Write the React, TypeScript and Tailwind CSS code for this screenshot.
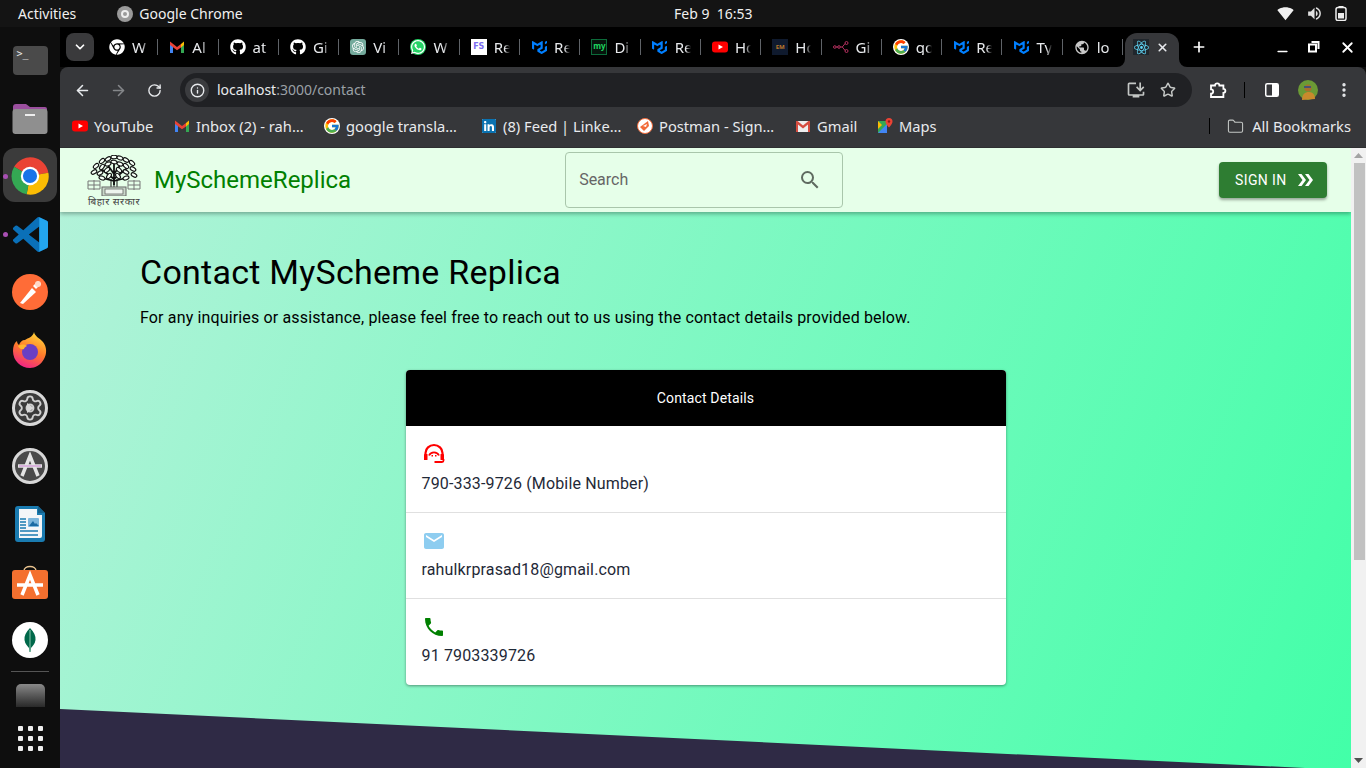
import type { ReactNode } from 'react'
import { ArrowLeft, ArrowRight, RotateCw, Info, Star, Folder, X, Plus, Minus, EllipsisVertical, Settings, ChevronDown } from 'lucide-react'
import { FaGithub, FaWhatsapp, FaChrome, FaLinkedin } from 'react-icons/fa'
import { FcGoogle } from 'react-icons/fc'
import { MdEmail, MdPhone, MdSearch, MdPublic, MdSignalWifi4Bar, MdVolumeUp, MdInstallDesktop } from 'react-icons/md'
import { SiMui, SiOpenai, SiReact } from 'react-icons/si'

const ui = "font-['Noto_Sans',sans-serif]"

function ChromeLogo({ size = 48 }: { size?: number }) {
  return (
    <svg width={size} height={size} viewBox="0 0 48 48">
      <path d="M24 24L5 13A22 22 0 0 1 46 20Z" fill="#ea4335" />
      <path d="M24 24L46 20A22 22 0 0 1 20 46Z" fill="#fbbc04" />
      <path d="M24 24L20 46A22 22 0 0 1 5 13Z" fill="#34a853" />
      <circle cx="24" cy="24" r="11" fill="#fff" />
      <circle cx="24" cy="24" r="8.5" fill="#1a73e8" />
    </svg>
  )
}

function GmailM() {
  return (
    <svg width="16" height="16" viewBox="0 0 16 16">
      <path d="M1 14V4l3 2.4V14z" fill="#4285f4" />
      <path d="M12 14V6.4L15 4v10z" fill="#34a853" />
      <path d="M1 2.5L8 8l4-3v3.4L8 11.2 1 6z" fill="#ea4335" />
      <path d="M12 5l3-2.5V6l-3 2.4z" fill="#fbbc04" />
    </svg>
  )
}

function YouTubeIcon() {
  return (
    <svg width="16" height="16" viewBox="0 0 16 16">
      <rect y="2.5" width="16" height="11" rx="3" fill="#f00" />
      <path d="M6.5 5.5v5L11 8z" fill="#fff" />
    </svg>
  )
}

function PostmanSmall() {
  return (
    <svg width="16" height="16" viewBox="0 0 16 16">
      <circle cx="8" cy="8" r="7.5" fill="#fff" stroke="#f26b3a" />
      <path d="M3 9l8-6 1 5-5 5z" fill="#f26b3a" />
      <path d="M6 8l4-2-1 3z" fill="#fff" />
    </svg>
  )
}

function GmailEnvelope() {
  return (
    <svg width="16" height="16" viewBox="0 0 16 16">
      <rect x="1" y="3" width="14" height="11" fill="#eee" />
      <path d="M1 3h1.5L8 7.5 13.500 3H15v11h-2V6.500L8 10.500 3 6.500V14H1z" fill="#d54c3f" />
    </svg>
  )
}

function MapsIcon() {
  return (
    <svg width="16" height="16" viewBox="0 0 16 16">
      <path d="M1 3h9v12H1z" fill="#34a853" />
      <path d="M1 15l9-9v9z" fill="#4285f4" />
      <path d="M1 3l4 4-4 4z" fill="#fbbc04" />
      <path d="M12 0a3.500 3.500 0 0 0-3.500 3.500C8.500 6 12 9.500 12 9.500S15.500 6 15.500 3.500A3.500 3.500 0 0 0 12 0z" fill="#ea4335" />
      <circle cx="12" cy="3.500" r="1.200" fill="#8c1d18" />
    </svg>
  )
}

function GitNodes() {
  return (
    <svg width="16" height="16" viewBox="0 0 16 16" fill="none" stroke="#b5305f" strokeWidth="1">
      <circle cx="1.800" cy="8" r="1.300" />
      <circle cx="6" cy="8" r="1.300" />
      <circle cx="13.500" cy="4" r="1.500" />
      <circle cx="13.500" cy="12" r="1.500" />
      <path d="M3 8h2M7.300 8h2l2.800-3.500M9.300 8l2.800 3.500" />
    </svg>
  )
}

const tabs: { icon: ReactNode; label: string }[] = [
  { icon: <FaChrome size={16} className="text-white" />, label: 'W' },
  { icon: <GmailM />, label: 'Al' },
  { icon: <FaGithub size={16} className="text-white" />, label: 'at' },
  { icon: <FaGithub size={16} className="text-white" />, label: 'Gi' },
  {
    icon: (
      <span className="w-4 h-4 rounded-[3px] bg-[#74aa9c] flex items-center justify-center">
        <SiOpenai size={12} className="text-white" />
      </span>
    ),
    label: 'Vi',
  },
  {
    icon: (
      <span className="w-4 h-4 rounded-full bg-[#25d366] flex items-center justify-center">
        <FaWhatsapp size={16} className="text-white" />
      </span>
    ),
    label: 'W',
  },
  {
    icon: (
      <span className="w-4 h-4 bg-white text-[#7b6cf0] text-[8px] font-bold leading-4 text-center font-['DejaVu_Sans',sans-serif]">
        FS
      </span>
    ),
    label: 'Re',
  },
  { icon: <SiMui size={15} className="text-[#007fff]" />, label: 'Re' },
  {
    icon: (
      <span className="w-4 h-4 bg-[#06130c] border border-[#0c6b3a] text-[#1ed760] text-[8px] font-bold leading-3 text-center">
        my
      </span>
    ),
    label: 'Di',
  },
  { icon: <SiMui size={15} className="text-[#007fff]" />, label: 'Re' },
  { icon: <YouTubeIcon />, label: 'Ho' },
  {
    icon: (
      <span className="w-4 h-4 bg-[#0f1a2e] text-[#b9772a] text-[6px] font-bold leading-4 text-center">
        EM
      </span>
    ),
    label: 'Ho',
  },
  { icon: <GitNodes />, label: 'Gi' },
  { icon: <FcGoogle size={16} className="bg-white rounded-full" />, label: 'go' },
  { icon: <SiMui size={15} className="text-[#007fff]" />, label: 'Re' },
  { icon: <SiMui size={15} className="text-[#007fff]" />, label: 'Ty' },
  { icon: <MdPublic size={17} className="text-[#c8c8c8]" />, label: 'lo' },
]

function TabStrip() {
  return (
    <div className="h-10 bg-black flex items-center text-white shrink-0">
      <div className="w-7 h-7 ml-1.5 mr-1 rounded-lg bg-[#3a3a3c] flex items-center justify-center shrink-0">
        <ChevronDown size={14} strokeWidth={3} />
      </div>
      {tabs.map((t, i) => (
        <div key={i} className="w-[60.3px] h-4 pl-[11px] flex items-center shrink-0">
          <span className="w-4 h-4 flex items-center justify-center shrink-0">{t.icon}</span>
          <span className="ml-[7px] w-[16px] overflow-hidden text-[15px] leading-4 text-[#e8eaed] whitespace-nowrap [mask-image:linear-gradient(to_right,black_65%,transparent)]">
            {t.label}
          </span>
          <span className="ml-auto w-px h-4 bg-[#5f6368]" />
        </div>
      ))}
      <div className="relative ml-[2px] mt-[6px] w-[54px] h-[34px] pb-[6px] bg-[#36373a] rounded-t-xl flex items-center pl-2 shrink-0">
        <svg className="absolute -left-2 bottom-0" width="8" height="8" viewBox="0 0 8 8"><path d="M8 0v8H0a8 8 0 0 0 8-8z" fill="#36373a" /></svg>
        <svg className="absolute -right-2 bottom-0" width="8" height="8" viewBox="0 0 8 8"><path d="M0 0v8h8a8 8 0 0 1-8-8z" fill="#36373a" /></svg>
        <span className="w-4 h-4 bg-[#20262c] flex items-center justify-center">
          <SiReact size={15} className="text-[#61dafb]" />
        </span>
        <X size={13} strokeWidth={3} className="ml-[7px] text-[#e8eaed]" />
      </div>
      <Plus size={16} strokeWidth={2.5} className="ml-3" />
      <Minus size={15} strokeWidth={2.5} className="ml-[68px] mt-2" />
      <svg className="ml-[18px]" width="12" height="12" viewBox="0 0 12 12" fill="none" stroke="#fff" strokeWidth="2">
        <path d="M3.500 1h7v7" />
        <rect x="1" y="3.500" width="7" height="7" />
      </svg>
      <X size={17} strokeWidth={2.5} className="ml-[19px]" />
    </div>
  )
}

function Toolbar() {
  return (
    <div className="h-10 shrink-0 bg-[#36373a] rounded-tr-lg rounded-tl-lg flex items-center pt-[6px] text-[#e8eaed]">
      <ArrowLeft size={17} strokeWidth={2.2} className="ml-[14px]" />
      <ArrowRight size={17} strokeWidth={2.2} className="ml-[19px] text-[#85878a]" />
      <RotateCw size={15} strokeWidth={2.2} className="ml-[20px]" />
      <div className="ml-[18px] w-[1012px] h-[34px] rounded-full bg-[#202124] flex items-center pl-[5px]">
        <span className="w-6 h-6 rounded-full bg-[#3b3c3f] flex items-center justify-center">
          <Info size={15} strokeWidth={2.2} />
        </span>
        <span className="ml-2 mb-[1px] text-[14px]">
          localhost<span className="text-[#9aa0a6]">:3000/contact</span>
        </span>
        <MdInstallDesktop size={20} className="ml-auto text-[#c4c7c5]" />
        <Star size={16} strokeWidth={2.2} className="ml-[14px] mr-4 text-[#c4c7c5]" />
      </div>
      <svg className="ml-[17px]" width="18" height="18" viewBox="0 0 18 18" fill="none" stroke="#fff" strokeWidth="1.800">
        <path d="M2 4.500h4a2.200 2.200 0 0 1 4.400 0h4v3.300a2 2 0 0 1 0 4V16H2v-3.300a1.800 1.800 0 0 0 0-4.400z" />
      </svg>
      <span className="ml-[17px] w-px h-4 bg-black" />
      <svg className="ml-[20px]" width="14" height="14" viewBox="0 0 14 14">
        <rect x="0.750" y="0.750" width="12.500" height="12.500" rx="1.500" fill="none" stroke="#fff" strokeWidth="1.500" />
        <rect x="7" y="1" width="6" height="12" fill="#fff" />
      </svg>
      <svg className="ml-[19px]" width="20" height="20" viewBox="0 0 20 20">
        <circle cx="10" cy="10" r="10" fill="#6b9a35" />
        <path d="M4 20c0-6 3-8 7-8s6 3 6 7z" fill="#c98a2c" />
        <circle cx="10" cy="8" r="3.500" fill="#a8702c" />
        <path d="M6 7h7" stroke="#2b4a8a" strokeWidth="1.500" />
      </svg>
      <EllipsisVertical size={18} strokeWidth={2.5} className="ml-[17px]" />
    </div>
  )
}

const bookmarks: { icon: ReactNode; label: string; cls: string }[] = [
  { icon: <YouTubeIcon />, label: 'YouTube', cls: 'ml-[12px] w-[81px]' },
  { icon: <GmailM />, label: 'Inbox (2) - rah…', cls: 'ml-[21px] w-[130px]' },
  { icon: <FcGoogle size={16} className="bg-white rounded-full" />, label: 'google transla…', cls: 'ml-[20px] w-[136px]' },
  {
    icon: (
      <span className="w-[14px] h-[14px] bg-white flex items-center justify-center">
        <FaLinkedin size={16} className="text-[#0a72b1]" />
      </span>
    ),
    label: '(8) Feed | Linke…',
    cls: 'ml-[21px] w-[136px]',
  },
  { icon: <PostmanSmall />, label: 'Postman - Sign…', cls: 'ml-[20px] w-[138px]' },
  { icon: <GmailEnvelope />, label: 'Gmail', cls: 'ml-[20px] w-[61px]' },
  { icon: <MapsIcon />, label: 'Maps', cls: 'ml-[21px] w-[58px]' },
]

function BookmarksBar() {
  return (
    <div className="h-[41px] shrink-0 bg-[#36373a] border-b border-[#2e2f31] pb-[2px] flex items-center text-[#e8eaed] text-[14.7px]">
      {bookmarks.map(b => (
        <div key={b.label} className={`flex items-center gap-[6px] whitespace-nowrap shrink-0 ${b.cls}`}>
          <span className="w-4 h-4 flex items-center justify-center shrink-0">{b.icon}</span>
          {b.label}
        </div>
      ))}
      <span className="ml-auto w-px h-4 bg-black" />
      <Folder size={17} strokeWidth={1.5} className="ml-[17px] text-[#c4c7c5]" />
      <span className="ml-2 mr-[15px]">All Bookmarks</span>
    </div>
  )
}

function DockSlot({ children, active, dot }: { children: ReactNode; active?: boolean; dot?: boolean }) {
  return (
    <div className="relative w-[60px] h-[58px] flex items-center justify-center shrink-0">
      {active && <span className="absolute left-[3px] top-[1px] w-[54px] h-[54px] rounded-xl bg-[#3b3b3b]" />}
      {dot && <span className="absolute left-[3px] top-[27px] w-[5px] h-[5px] rounded-full bg-[#a84fb3]" />}
      <span className="relative flex">{children}</span>
    </div>
  )
}

function Dock() {
  return (
    <div className="w-[60px] shrink-0 bg-[#0e0e0e] flex flex-col items-center pt-1">
      <DockSlot>
        <span className="w-[35px] h-[29px] rounded-[4px] bg-[#4a4a4a] text-[#e8e8e8] text-[10px] leading-3 pl-1 pt-[2px] font-['DejaVu_Sans_Mono',monospace]">
          &gt;_
        </span>
      </DockSlot>
      <DockSlot>
        <svg width="36" height="32" viewBox="0 0 36 32">
          <path d="M1 5a3 3 0 0 1 3-3h10l4 3h15a2 2 0 0 1 2 2v6H1z" fill="#9b4f9e" />
          <rect x="0.500" y="7" width="35" height="25" rx="3" fill="#8f8f8f" />
          <rect x="13" y="12" width="10" height="2" fill="#eee" />
        </svg>
      </DockSlot>
      <DockSlot active dot>
        <ChromeLogo size={40} />
      </DockSlot>
      <DockSlot dot>
        <svg width="35" height="35" viewBox="0 0 24 24">
          <path fill="#0a70b8" d="M23.150 2.587L18.210.21a1.494 1.494 0 0 0-1.705.29l-9.460 8.630-4.120-3.128a.999.999 0 0 0-1.276.057L.327 7.261A1 1 0 0 0 .326 8.740L3.899 12 .326 15.260a1 1 0 0 0 .001 1.479L1.650 17.940a.999.999 0 0 0 1.276.057l4.120-3.128 9.460 8.630a1.492 1.492 0 0 0 1.704.29l4.942-2.377A1.500 1.500 0 0 0 24 20.060V3.939a1.500 1.500 0 0 0-.85-1.352zm-5.146 14.861L10.826 12l7.178-5.448v10.896z" />
          <path fill="#23a5ee" d="M18 .1l5.150 2.487A1.500 1.500 0 0 1 24 3.939V20.060a1.500 1.500 0 0 1-.85 1.352L18 23.900z" />
        </svg>
      </DockSlot>
      <DockSlot>
        <svg width="36" height="36" viewBox="0 0 36 36">
          <circle cx="18" cy="18" r="18" fill="#ff6c37" />
          <path d="M8 29l12-15 4 4-13 12z" fill="#fff" />
          <path d="M21 12l5-5 3 3-5 5z" fill="#fff" />
          <circle cx="26" cy="10" r="3" fill="#ffd9c8" />
        </svg>
      </DockSlot>
      <DockSlot>
        <svg width="34" height="36" viewBox="0 0 34 36">
          <defs>
            <linearGradient id="ff" x1="0.700" y1="0" x2="0.300" y2="1">
              <stop offset="0" stopColor="#ffd73a" />
              <stop offset="0.500" stopColor="#ff7a2a" />
              <stop offset="1" stopColor="#f0208a" />
            </linearGradient>
          </defs>
          <path d="M21 0c1 5 6 6 9 10 4 5 4 12 1 17-3 6-9 9-14 9C8 36 0 29 0 19c0-4 1-8 4-10 0 2 1 3 2 4 1-3 3-5 6-5 3-2 8-3 9-8z" fill="url(#ff)" />
          <circle cx="17" cy="20" r="8" fill="#6a3fc4" />
          <path d="M5 14c3-2 7-2 9 0-2 1-3 2-3 3-3 1-5-1-6-3z" fill="#ffb52e" />
        </svg>
      </DockSlot>
      <DockSlot>
        <span className="w-9 h-9 rounded-full border-[3px] border-[#d8d8d8] bg-[#3b3b3b] flex items-center justify-center relative">
          <Settings size={28} strokeWidth={1.6} className="text-[#d0d0d0]" />
          <svg className="absolute" width="10" height="10" viewBox="0 0 10 10"><path d="M2 0l7 5-7 5z" fill="#d8d8d8" /></svg>
        </span>
      </DockSlot>
      <DockSlot>
        <svg width="36" height="36" viewBox="0 0 36 36">
          <circle cx="18" cy="18" r="16.500" fill="#4a4a4a" stroke="#d8d8d8" strokeWidth="3" />
          <path d="M10 28l8-20 8 20M6 18h24" fill="none" stroke="#e4e4e4" strokeWidth="3.500" />
          <path d="M7 18h22" stroke="#d9b3dd" strokeWidth="2" />
        </svg>
      </DockSlot>
      <DockSlot>
        <svg width="30" height="36" viewBox="0 0 30 36">
          <path d="M3 0h20l7 7v26a3 3 0 0 1-3 3H3a3 3 0 0 1-3-3V3a3 3 0 0 1 3-3z" fill="#1a7bb0" />
          <path d="M4 3h18v6h5v21a2 2 0 0 1-2 2H4z" fill="#f4f6f8" />
          <path d="M23 0l7 7h-7z" fill="#14628d" />
          <path d="M5 13h6M5 16h6M5 19h6M5 22h6M5 25h18M5 29h18" stroke="#1a7bb0" strokeWidth="1.500" />
          <rect x="13" y="12" width="11" height="9" rx="1" fill="#7cb6dc" />
          <path d="M14 20l4-5 2 3 1-1 3 3z" fill="#1a6aa3" />
        </svg>
      </DockSlot>
      <DockSlot>
        <svg width="36" height="34" viewBox="0 0 36 34">
          <path d="M12 6c0-6 12-6 12 0" fill="none" stroke="#e8c38f" strokeWidth="1.500" />
          <rect y="5" width="36" height="29" rx="3" fill="#f4702f" />
          <path d="M10 30l8-20 8 20M5 20h26" fill="none" stroke="#fff" strokeWidth="3.500" />
        </svg>
      </DockSlot>
      <DockSlot>
        <svg width="36" height="36" viewBox="0 0 36 36">
          <circle cx="18" cy="18" r="18" fill="#fff" />
          <path d="M18 6c4 4 6 8 5.500 12-.5 4-3 6-4.500 8l-.5 4h-1l-.5-4c-1.500-2-4-4-4.500-8C12 14 14 10 18 6z" fill="#00684a" />
          <path d="M18 8v22" stroke="#8bc6ad" strokeWidth="1" />
        </svg>
      </DockSlot>
      <span className="mt-[2px] w-[38px] h-px bg-[#555] shrink-0" />
      <span className="mt-[12px] w-[29px] h-[23px] rounded-t-[5px] bg-gradient-to-b from-[#8a8a8a] to-[#2a2a2a] shrink-0" />
      <div className="mt-[19px] grid grid-cols-3 gap-[5px] shrink-0">
        {Array.from({ length: 9 }).map((_, i) => (
          <span key={i} className="w-[5px] h-[5px] rounded-[1px] bg-[#eee]" />
        ))}
      </div>
    </div>
  )
}

function BiharEmblem() {
  const leaves = [
    [14, 6, -40], [20, 4, -30], [26, 2, 0], [32, 3, 20], [38, 5, 30], [44, 8, 40],
    [8, 11, -40], [14, 12, -50], [20, 9, -20], [26, 7, 10], [32, 9, 20], [38, 11, 40], [45, 14, 30],
    [6, 17, -30], [12, 18, -30], [19, 15, -40], [31, 15, 40], [38, 17, 30], [46, 20, 30],
    [14, 23, 20], [21, 21, -50], [30, 21, 50], [38, 23, -20],
  ]
  return (
    <div className="w-[54px] flex flex-col items-center shrink-0">
      <svg width="54" height="41" viewBox="0 0 54 41">
        <path d="M27 30V6M27 24L13 13M27 24l13-11M27 19l-7-10M27 19l7-10M27 26l-12-3M27 26l12-3" stroke="#111" strokeWidth="1.800" fill="none" />
        <g fill="#f6fff6" stroke="#111" strokeWidth="1.100">
          {leaves.map(([x, y, r], i) => (
            <ellipse key={i} cx={x + 1} cy={y} rx="3.100" ry="1.800" transform={`rotate(${r} ${x + 1} ${y})`} />
          ))}
        </g>
        <path d="M24 24v8M30 24v8M27 24v8" stroke="#111" strokeWidth="1" />
        <path d="M1 26h12v8H1zM41 26h12v8H41zM7 25v10M1 30h12M47 25v10M41 30h12" stroke="#777" strokeWidth="1" fill="none" />
        <rect x="15" y="32" width="24" height="9" fill="#c9d8ca" stroke="#666" />
        <rect x="18" y="34" width="18" height="5" fill="#eef5ee" stroke="#555" strokeWidth="0.700" />
      </svg>
      <span className="text-[10px] leading-[10px] tracking-[0.5px] text-[#444] whitespace-nowrap font-['Noto_Sans',sans-serif]">बिहार सरकार</span>
    </div>
  )
}

function HeadsetIcon() {
  return (
    <svg width="24" height="24" viewBox="0 0 24 24" fill="none" stroke="#ff0000">
      <path d="M3.500 12v-1a8.500 8 0 0 1 17 0v1" strokeWidth="2.200" />
      <path d="M7 13.500a5.500 5.500 0 0 1 10 0" strokeWidth="1.800" />
      <rect x="2" y="12" width="3.500" height="6" rx="0.500" fill="#ff0000" stroke="none" />
      <rect x="18.500" y="12" width="3.500" height="6" rx="0.500" fill="#ff0000" stroke="none" />
      <rect x="9.500" y="13" width="1.500" height="1.500" fill="#ff0000" stroke="none" />
      <rect x="13" y="13" width="1.500" height="1.500" fill="#ff0000" stroke="none" />
      <path d="M21.500 17v1.500a1.500 1.500 0 0 1-1.500 1.500h-7.500" strokeWidth="1.800" />
    </svg>
  )
}

const contacts: { icon: ReactNode; text: string; cls: string; textCls: string }[] = [
  { icon: <HeadsetIcon />, text: '790-333-9726 (Mobile Number)', cls: 'h-[86px]', textCls: 'mt-[6px]' },
  { icon: <MdEmail size={24} className="text-[#8ecdf0]" />, text: 'rahulkrprasad18@gmail.com', cls: 'h-[86px] border-t', textCls: 'mt-[5px]' },
  { icon: <MdPhone size={24} className="text-[#008000]" />, text: '91 7903339726', cls: 'h-[87px] border-t', textCls: 'mt-[5px]' },
]

function Page() {
  return (
    <div className="flex-1 min-w-0 flex flex-col overflow-hidden bg-[linear-gradient(112deg,#b4f2da,#42ffa8)] font-['Roboto',sans-serif]">
      <header className="relative z-10 h-16 shrink-0 bg-[#e6ffe9] shadow-[0_2px_4px_rgba(0,0,0,0.3)] flex items-center pl-[27px]">
        <BiharEmblem />
        <span className="ml-[13px] text-[24px] text-[#008000]">MySchemeReplica</span>
        <div className="ml-[214px] w-[278px] h-14 rounded-[4px] border border-[#a9c6ab] flex items-center pl-[13px] pr-[20px] text-[#666]">
          <span className="text-[16px]">Search</span>
          <MdSearch size={24} className="ml-auto text-[#5f6b60]" />
        </div>
        <button className="ml-auto mr-6 w-[108px] h-9 rounded-[4px] bg-[#2e7d32] text-white text-[14px] tracking-[0.4px] uppercase flex items-center pl-4 shadow-[0_2px_3px_rgba(0,0,0,0.35)]">
          Sign in
          <svg className="ml-[11px]" width="15" height="12" viewBox="0 0 15 12" fill="#fff">
            <path d="M0 0h3.500L8 6l-4.500 6H0l4.500-6z" />
            <path d="M7 0h3.500L15 6l-4.500 6H7l4.500-6z" />
          </svg>
        </button>
      </header>
      <main className="px-20 pt-[39px] shrink-0">
        <h1 className="text-[34px] leading-[42px] tracking-[0.25px] text-black">Contact MyScheme Replica</h1>
        <p className="mt-[13px] text-[16px] leading-6 tracking-[0.15px] text-black">
          For any inquiries or assistance, please feel free to reach out to us using the contact details provided below.
        </p>
        <div className="mt-10 mx-auto w-[600px] rounded-[4px] bg-white overflow-hidden shadow-[0_1px_3px_rgba(0,0,0,0.4)]">
          <div className="h-14 bg-black text-white text-[14px] tracking-[0.15px] flex items-center justify-center">Contact Details</div>
          {contacts.map(c => (
            <div key={c.text} className={`px-4 pt-4 border-[#e0e0e0] ${c.cls}`}>
              {c.icon}
              <div className={`text-[16px] leading-6 tracking-[0.15px] text-[#1f2937] ${c.textCls}`}>{c.text}</div>
            </div>
          ))}
        </div>
      </main>
      <div className="mt-6 w-[1245px] h-[59px] shrink-0 bg-[#2f2a45] [clip-path:polygon(0_0,100%_100%,0_100%)]" />
    </div>
  )
}

function Scrollbar() {
  return (
    <div className="w-[15px] shrink-0 bg-[#f1f1f1] flex flex-col items-center">
      <svg className="mt-[5px] shrink-0" width="9" height="5" viewBox="0 0 9 5"><path d="M4.500 0L9 5H0z" fill="#a3a3a3" /></svg>
      <span className="mt-[5px] ml-[1px] w-[11px] h-[397px] bg-[#c1c1c1] shrink-0" />
      <svg className="mt-auto mb-[5px] shrink-0" width="9" height="5" viewBox="0 0 9 5"><path d="M0 0h9L4.500 5z" fill="#505050" /></svg>
    </div>
  )
}

export default function App() {
  return (
    <div className={`w-[1366px] h-[768px] overflow-hidden flex flex-col bg-[#0e0e0e] ${ui}`}>
      <div className="h-[27px] shrink-0 bg-[#141414] text-[#f0f0f0] text-[14px] relative flex items-center">
        <span className="ml-[18px]">Activities</span>
        <span className="ml-[41px] w-4 h-4 rounded-full bg-[#9a9a9a] flex items-center justify-center">
          <span className="w-2 h-2 rounded-full border-2 border-[#eee]" />
        </span>
        <span className="ml-[6px]">Google Chrome</span>
        <span className="absolute left-[674px]">Feb 9&nbsp;&nbsp;16:53</span>
        <MdSignalWifi4Bar size={17} className="ml-auto" />
        <MdVolumeUp size={17} className="ml-[12px] text-[#e0e0e0]" />
        <svg className="ml-[12px] mr-[19px]" width="12" height="15" viewBox="0 0 12 15" fill="none">
          <rect x="3.500" y="0" width="5" height="2" fill="#eee" />
          <rect x="1" y="1.500" width="10" height="13" rx="2" stroke="#eee" strokeWidth="1.500" />
          <rect x="3" y="7" width="6" height="5.500" fill="#eee" />
        </svg>
      </div>
      <div className="flex-1 min-h-0 flex">
        <Dock />
        <div className="flex-1 min-w-0 flex flex-col">
          <TabStrip />
          <Toolbar />
          <BookmarksBar />
          <div className="flex-1 min-h-0 flex">
            <Page />
            <Scrollbar />
          </div>
        </div>
      </div>
    </div>
  )
}
